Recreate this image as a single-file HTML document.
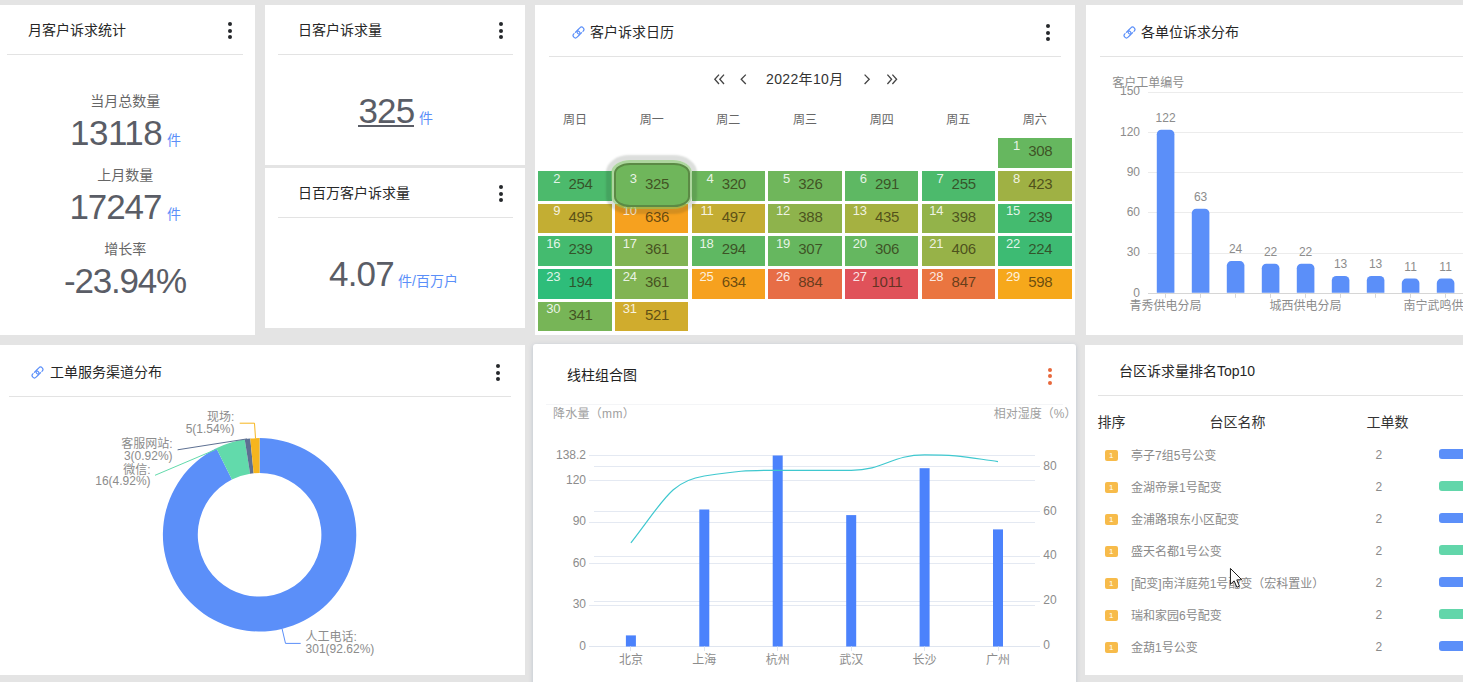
<!DOCTYPE html>
<html lang="zh-CN"><head><meta charset="utf-8"><title>客户诉求统计</title>
<style>
*{box-sizing:border-box;margin:0;padding:0}
html,body{width:1463px;height:682px;overflow:hidden;background:#e4e4e4}
body{position:relative;font-family:"Liberation Sans","Noto Sans CJK SC",sans-serif;color:#333;font-size:14px}
.card{position:absolute;background:#fff;overflow:hidden}
.abs{position:absolute;white-space:nowrap}
.title{position:absolute;font-size:14px;line-height:20px;color:#262626;white-space:nowrap}
.hr{position:absolute;height:1px;background:#e3e3e3}
.dots{position:absolute;width:4px}
.dots i{position:absolute;left:0;width:4px;height:4px;border-radius:50%;background:#25282b}
.lab{position:absolute;font-size:14px;line-height:16px;color:#666;white-space:nowrap;text-align:center}
.big{position:absolute;font-size:35px;line-height:36px;color:#5a5d66;white-space:nowrap;letter-spacing:-0.8px}
.unit{position:absolute;font-size:14px;line-height:16px;color:#5b8ff9;white-space:nowrap}
.wk{position:absolute;font-size:12px;line-height:14px;color:#666;text-align:center;white-space:nowrap}
.cell{position:absolute;width:73.5px;height:29.7px}
.cell b{position:absolute;font-weight:normal;font-size:13px;line-height:12px;color:rgba(255,255,255,.86);right:51.6px;top:1.7px;white-space:nowrap;letter-spacing:-0.2px}
.cell span{position:absolute;font-size:15px;line-height:16px;color:rgba(45,38,10,.7);left:12.2px;width:60px;text-align:center;top:5px;white-space:nowrap;letter-spacing:-0.3px}
svg{position:absolute;left:0;top:0;overflow:visible}
svg text{font-family:"Liberation Sans","Noto Sans CJK SC",sans-serif}
.th{position:absolute;font-size:14px;line-height:16px;color:#333;white-space:nowrap}
.td{position:absolute;font-size:12px;line-height:14px;color:#8a8a8a;white-space:nowrap}
.badge{position:absolute;width:12.9px;height:11px;border-radius:2px;background:#f7bb4a;color:#fff;font-size:8px;line-height:11.4px;text-align:center}
.pbar{position:absolute;height:9.6px;border-radius:3px 0 0 3px}
</style></head><body>

<div class="card" style="left:0;top:5px;width:255px;height:330px">
<div class="title" style="left:28px;top:15px">月客户诉求统计</div>
<div class="dots" style="left:228.4px;top:17.4px"><i style="top:0.0px;background:#25282b"></i><i style="top:6.5px;background:#25282b"></i><i style="top:13.1px;background:#25282b"></i></div>
<div class="hr" style="left:7px;top:49px;width:236px"></div>
<div class="lab" style="left:65.3px;top:88.0px;width:120px">当月总数量</div><div class="big" style="left:70.0px;top:109.7px;letter-spacing:-0.50px">13118</div><div class="unit" style="left:167.0px;top:126.7px">件</div>
<div class="lab" style="left:65.3px;top:162.0px;width:120px">上月数量</div><div class="big" style="left:69.5px;top:183.7px;letter-spacing:-1.10px">17247</div><div class="unit" style="left:167.0px;top:200.7px">件</div>
<div class="lab" style="left:65.3px;top:236.0px;width:120px">增长率</div><div class="big" style="left:64.0px;top:258.0px;letter-spacing:-1.20px">-23.94%</div>
</div>
<div class="card" style="left:265px;top:5px;width:260px;height:160px">
<div class="title" style="left:33px;top:15px">日客户诉求量</div>
<div class="dots" style="left:233.5px;top:17.4px"><i style="top:0.0px;background:#25282b"></i><i style="top:6.5px;background:#25282b"></i><i style="top:13.1px;background:#25282b"></i></div>
<div class="hr" style="left:13px;top:49px;width:235px"></div>
<div class="big" style="left:93.4px;top:88px">325</div>
<div class="abs" style="left:93px;top:120.2px;width:56px;height:1.4px;background:#5a5d66"></div>
<div class="unit" style="left:154px;top:104.5px">件</div>
</div>
<div class="card" style="left:265px;top:168px;width:260px;height:160px">
<div class="title" style="left:33px;top:15px">日百万客户诉求量</div>
<div class="dots" style="left:233.5px;top:17.4px"><i style="top:0.0px;background:#25282b"></i><i style="top:6.5px;background:#25282b"></i><i style="top:13.1px;background:#25282b"></i></div>
<div class="hr" style="left:13px;top:49px;width:235px"></div>
<div class="big" style="left:64px;top:88px">4.07</div>
<div class="unit" style="left:133px;top:104.5px">件/百万户</div>
</div>
<div class="card" style="left:535px;top:5px;width:540px;height:330px;overflow:visible">
<svg style="left:36.5px;top:20.5px" width="13" height="13" viewBox="0 0 13 13" fill="none" stroke="#5b8ff9" stroke-width="1.15" stroke-linecap="round"><g transform="translate(6.5 6.5) rotate(-45)"><path d="M3.90 2.35 H4.30 A2.35 2.35 0 0 0 4.30 -2.35 H1.20 A2.35 2.35 0 0 0 1.20 2.35 H2.10"/><path d="M-3.90 -2.35 H-4.30 A2.35 2.35 0 0 0 -4.30 2.35 H-1.20 A2.35 2.35 0 0 0 -1.20 -2.35 H-2.10"/></g></svg>
<div class="title" style="left:55px;top:17px">客户诉求日历</div>
<div class="dots" style="left:511.3px;top:19.4px"><i style="top:0.0px;background:#25282b"></i><i style="top:6.5px;background:#25282b"></i><i style="top:13.1px;background:#25282b"></i></div>
<div class="hr" style="left:14px;top:51px;width:512px"></div>
<svg width="540" height="100" fill="none" stroke="#444" stroke-width="1.3"><path d="M184 69.6 l-4.2 4.7 l4.2 4.7 M189 69.6 l-4.2 4.7 l4.2 4.7"/><path d="M210.8 69.6 l-4.6 4.7 l4.6 4.7"/><path d="M329.6 69.6 l4.6 4.7 l-4.6 4.7"/><path d="M352.4 69.6 l4.2 4.7 l-4.2 4.7 M357.4 69.6 l4.2 4.7 l-4.2 4.7"/></svg>
<div class="abs" style="left:231px;top:64px;font-size:14px;line-height:20px;color:#333;letter-spacing:.35px">2022年10月</div>
<div class="wk" style="left:3.3px;top:108px;width:73.5px">周日</div>
<div class="wk" style="left:79.9px;top:108px;width:73.5px">周一</div>
<div class="wk" style="left:156.6px;top:108px;width:73.5px">周二</div>
<div class="wk" style="left:233.2px;top:108px;width:73.5px">周三</div>
<div class="wk" style="left:309.9px;top:108px;width:73.5px">周四</div>
<div class="wk" style="left:386.5px;top:108px;width:73.5px">周五</div>
<div class="wk" style="left:463.1px;top:108px;width:73.5px">周六</div>
<div class="cell" style="left:463.1px;top:133.2px;background:#66b75f"><b>1</b><span>308</span></div>
<div class="cell" style="left:3.3px;top:165.9px;background:#4cba6c"><b>2</b><span>254</span></div>
<div class="cell" style="left:156.6px;top:165.9px;background:#6cb75c"><b>4</b><span>320</span></div>
<div class="cell" style="left:233.2px;top:165.9px;background:#6fb65b"><b>5</b><span>326</span></div>
<div class="cell" style="left:309.9px;top:165.9px;background:#5eb863"><b>6</b><span>291</span></div>
<div class="cell" style="left:386.5px;top:165.9px;background:#4cba6c"><b>7</b><span>255</span></div>
<div class="cell" style="left:463.1px;top:165.9px;background:#9fb144"><b>8</b><span>423</span></div>
<div class="cell" style="left:3.3px;top:198.6px;background:#c3ae33"><b>9</b><span>495</span></div>
<div class="cell" style="left:79.9px;top:198.6px;background:#f6a11f"><b>10</b><span>636</span></div>
<div class="cell" style="left:156.6px;top:198.6px;background:#c4ad33"><b>11</b><span>497</span></div>
<div class="cell" style="left:233.2px;top:198.6px;background:#8eb34c"><b>12</b><span>388</span></div>
<div class="cell" style="left:309.9px;top:198.6px;background:#a5b141"><b>13</b><span>435</span></div>
<div class="cell" style="left:386.5px;top:198.6px;background:#93b34a"><b>14</b><span>398</span></div>
<div class="cell" style="left:463.1px;top:198.6px;background:#44bb6f"><b>15</b><span>239</span></div>
<div class="cell" style="left:3.3px;top:231.4px;background:#44bb6f"><b>16</b><span>239</span></div>
<div class="cell" style="left:79.9px;top:231.4px;background:#81b453"><b>17</b><span>361</span></div>
<div class="cell" style="left:156.6px;top:231.4px;background:#5fb862"><b>18</b><span>294</span></div>
<div class="cell" style="left:233.2px;top:231.4px;background:#66b75f"><b>19</b><span>307</span></div>
<div class="cell" style="left:309.9px;top:231.4px;background:#65b760"><b>20</b><span>306</span></div>
<div class="cell" style="left:386.5px;top:231.4px;background:#97b248"><b>21</b><span>406</span></div>
<div class="cell" style="left:463.1px;top:231.4px;background:#3dbb73"><b>22</b><span>224</span></div>
<div class="cell" style="left:3.3px;top:264.1px;background:#2ebd7a"><b>23</b><span>194</span></div>
<div class="cell" style="left:79.9px;top:264.1px;background:#81b453"><b>24</b><span>361</span></div>
<div class="cell" style="left:156.6px;top:264.1px;background:#f6a11f"><b>25</b><span>634</span></div>
<div class="cell" style="left:233.2px;top:264.1px;background:#e76d46"><b>26</b><span>884</span></div>
<div class="cell" style="left:309.9px;top:264.1px;background:#e0525a"><b>27</b><span>1011</span></div>
<div class="cell" style="left:386.5px;top:264.1px;background:#ea7540"><b>28</b><span>847</span></div>
<div class="cell" style="left:463.1px;top:264.1px;background:#f6a81b"><b>29</b><span>598</span></div>
<div class="cell" style="left:3.3px;top:296.8px;background:#77b557"><b>30</b><span>341</span></div>
<div class="cell" style="left:79.9px;top:296.8px;background:#d0ac2d"><b>31</b><span>521</span></div>
<div class="abs" style="left:76.3px;top:155.2px;width:81px;height:49px;border-radius:19px/13px;background:rgba(118,186,94,.6);box-shadow:0 0 2px 4.5px rgba(40,50,40,.16)"></div>
<div class="abs" style="left:79.3px;top:157.9px;width:75.4px;height:44.4px;border-radius:16px/10.5px;background:#6fb65b;border:2.3px solid #5b8a45"></div>
<div class="cell" style="left:79.9px;top:165.9px"><b>3</b><span>325</span></div>
</div>
<div class="card" style="left:1086px;top:5px;width:400px;height:330px">
<svg style="left:36.5px;top:20.5px" width="13" height="13" viewBox="0 0 13 13" fill="none" stroke="#5b8ff9" stroke-width="1.15" stroke-linecap="round"><g transform="translate(6.5 6.5) rotate(-45)"><path d="M3.90 2.35 H4.30 A2.35 2.35 0 0 0 4.30 -2.35 H1.20 A2.35 2.35 0 0 0 1.20 2.35 H2.10"/><path d="M-3.90 -2.35 H-4.30 A2.35 2.35 0 0 0 -4.30 2.35 H-1.20 A2.35 2.35 0 0 0 -1.20 -2.35 H-2.10"/></g></svg>
<div class="title" style="left:55px;top:17px">各单位诉求分布</div>
<div class="hr" style="left:14px;top:51px;width:400px"></div>
<svg width="400" height="330" font-size="12"><line x1="62" x2="400" y1="248.5" y2="248.5" stroke="#ececec" stroke-width="1"/><line x1="62" x2="400" y1="207.5" y2="207.5" stroke="#ececec" stroke-width="1"/><line x1="62" x2="400" y1="167.5" y2="167.5" stroke="#ececec" stroke-width="1"/><line x1="62" x2="400" y1="127.5" y2="127.5" stroke="#ececec" stroke-width="1"/><line x1="62" x2="400" y1="87.5" y2="87.5" stroke="#ececec" stroke-width="1"/><line x1="62" x2="400" y1="288.5" y2="288.5" stroke="#d6d6d6" stroke-width="1"/><text x="54" y="291.5" text-anchor="end" fill="#8c8c8c">0</text><text x="54" y="251.3" text-anchor="end" fill="#8c8c8c">30</text><text x="54" y="211.1" text-anchor="end" fill="#8c8c8c">60</text><text x="54" y="170.8" text-anchor="end" fill="#8c8c8c">90</text><text x="54" y="130.6" text-anchor="end" fill="#8c8c8c">120</text><text x="54" y="90.4" text-anchor="end" fill="#8c8c8c">150</text><text x="26.3" y="82.2" fill="#8c8c8c">客户工单编号</text><path d="M70.8 287.8 V129.2 a4.5 4.5 0 0 1 4.5 -4.5 h8.6 a4.5 4.5 0 0 1 4.5 4.5 V287.8 z" fill="#5b8ff9"/><text x="79.6" y="116.7" text-anchor="middle" fill="#8c8c8c">122</text><line x1="79.5" x2="79.5" y1="288.3" y2="292.8" stroke="#d6d6d6"/><path d="M105.8 287.8 V208.3 a4.5 4.5 0 0 1 4.5 -4.5 h8.6 a4.5 4.5 0 0 1 4.5 4.5 V287.8 z" fill="#5b8ff9"/><text x="114.6" y="195.8" text-anchor="middle" fill="#8c8c8c">63</text><line x1="114.5" x2="114.5" y1="288.3" y2="292.8" stroke="#d6d6d6"/><path d="M140.8 287.8 V260.6 a4.5 4.5 0 0 1 4.5 -4.5 h8.6 a4.5 4.5 0 0 1 4.5 4.5 V287.8 z" fill="#5b8ff9"/><text x="149.6" y="248.1" text-anchor="middle" fill="#8c8c8c">24</text><line x1="149.5" x2="149.5" y1="288.3" y2="292.8" stroke="#d6d6d6"/><path d="M175.8 287.8 V263.3 a4.5 4.5 0 0 1 4.5 -4.5 h8.6 a4.5 4.5 0 0 1 4.5 4.5 V287.8 z" fill="#5b8ff9"/><text x="184.6" y="250.8" text-anchor="middle" fill="#8c8c8c">22</text><line x1="184.5" x2="184.5" y1="288.3" y2="292.8" stroke="#d6d6d6"/><path d="M210.8 287.8 V263.3 a4.5 4.5 0 0 1 4.5 -4.5 h8.6 a4.5 4.5 0 0 1 4.5 4.5 V287.8 z" fill="#5b8ff9"/><text x="219.6" y="250.8" text-anchor="middle" fill="#8c8c8c">22</text><line x1="219.5" x2="219.5" y1="288.3" y2="292.8" stroke="#d6d6d6"/><path d="M245.8 287.8 V275.4 a4.5 4.5 0 0 1 4.5 -4.5 h8.6 a4.5 4.5 0 0 1 4.5 4.5 V287.8 z" fill="#5b8ff9"/><text x="254.6" y="262.9" text-anchor="middle" fill="#8c8c8c">13</text><line x1="254.5" x2="254.5" y1="288.3" y2="292.8" stroke="#d6d6d6"/><path d="M280.8 287.8 V275.4 a4.5 4.5 0 0 1 4.5 -4.5 h8.6 a4.5 4.5 0 0 1 4.5 4.5 V287.8 z" fill="#5b8ff9"/><text x="289.6" y="262.9" text-anchor="middle" fill="#8c8c8c">13</text><line x1="289.5" x2="289.5" y1="288.3" y2="292.8" stroke="#d6d6d6"/><path d="M315.8 287.8 V278.1 a4.5 4.5 0 0 1 4.5 -4.5 h8.6 a4.5 4.5 0 0 1 4.5 4.5 V287.8 z" fill="#5b8ff9"/><text x="324.6" y="265.6" text-anchor="middle" fill="#8c8c8c">11</text><line x1="324.5" x2="324.5" y1="288.3" y2="292.8" stroke="#d6d6d6"/><path d="M350.8 287.8 V278.1 a4.5 4.5 0 0 1 4.5 -4.5 h8.6 a4.5 4.5 0 0 1 4.5 4.5 V287.8 z" fill="#5b8ff9"/><text x="359.6" y="265.6" text-anchor="middle" fill="#8c8c8c">11</text><line x1="359.5" x2="359.5" y1="288.3" y2="292.8" stroke="#d6d6d6"/><path d="M385.8 287.8 V279.4 a4.5 4.5 0 0 1 4.5 -4.5 h8.6 a4.5 4.5 0 0 1 4.5 4.5 V287.8 z" fill="#5b8ff9"/><text x="394.6" y="266.9" text-anchor="middle" fill="#8c8c8c">10</text><line x1="394.5" x2="394.5" y1="288.3" y2="292.8" stroke="#d6d6d6"/><text x="79.6" y="305.2" text-anchor="middle" fill="#8c8c8c">青秀供电分局</text><text x="219.6" y="305.2" text-anchor="middle" fill="#8c8c8c">城西供电分局</text><text x="359.6" y="305.2" text-anchor="middle" fill="#8c8c8c">南宁武鸣供电局</text></svg>
</div>
<div class="card" style="left:0;top:345px;width:525px;height:330px">
<svg style="left:31.4px;top:20.5px" width="13" height="13" viewBox="0 0 13 13" fill="none" stroke="#5b8ff9" stroke-width="1.15" stroke-linecap="round"><g transform="translate(6.5 6.5) rotate(-45)"><path d="M3.90 2.35 H4.30 A2.35 2.35 0 0 0 4.30 -2.35 H1.20 A2.35 2.35 0 0 0 1.20 2.35 H2.10"/><path d="M-3.90 -2.35 H-4.30 A2.35 2.35 0 0 0 -4.30 2.35 H-1.20 A2.35 2.35 0 0 0 -1.20 -2.35 H-2.10"/></g></svg>
<div class="title" style="left:50px;top:17px">工单服务渠道分布</div>
<div class="dots" style="left:496.3px;top:19.4px"><i style="top:0.0px;background:#25282b"></i><i style="top:6.5px;background:#25282b"></i><i style="top:13.1px;background:#25282b"></i></div>
<div class="hr" style="left:9px;top:51px;width:502px"></div>
<svg width="525" height="330" font-size="12"><path d="M259.60 93.10 A96.70 96.70 0 1 1 216.32 103.32 L231.94 134.53 A61.80 61.80 0 1 0 259.60 128.00 Z" fill="#5b8ff9"/><path d="M216.32 103.32 A96.70 96.70 0 0 1 244.70 94.25 L250.08 128.74 A61.80 61.80 0 0 0 231.94 134.53 Z" fill="#62daab"/><path d="M244.70 94.25 A96.70 96.70 0 0 1 250.27 93.55 L253.64 128.29 A61.80 61.80 0 0 0 250.08 128.74 Z" fill="#5d7092"/><path d="M250.27 93.55 A96.70 96.70 0 0 1 259.60 93.10 L259.60 128.00 A61.80 61.80 0 0 0 253.64 128.29 Z" fill="#f6b51e"/><path d="M239.7 78.2 H254.5 L255.5 93.2" fill="none" stroke="#f6b51e" stroke-width="1"/><path d="M177.6 104.8 L247 93.9" fill="none" stroke="#5d7092" stroke-width="1"/><path d="M155 130.3 L217 104" fill="none" stroke="#62daab" stroke-width="1"/><path d="M282.1 283.9 L285.5 298.4 H300.7" fill="none" stroke="#5b8ff9" stroke-width="1"/><text x="234.4" y="76.2" text-anchor="end" fill="#8c8c8c">现场:</text><text x="234.4" y="88.2" text-anchor="end" fill="#8c8c8c">5(1.54%)</text><text x="172.6" y="102.6" text-anchor="end" fill="#8c8c8c">客服网站:</text><text x="172.6" y="114.6" text-anchor="end" fill="#8c8c8c">3(0.92%)</text><text x="150.6" y="128.6" text-anchor="end" fill="#8c8c8c">微信:</text><text x="150.6" y="140.2" text-anchor="end" fill="#8c8c8c">16(4.92%)</text><text x="305.6" y="296.3" text-anchor="start" fill="#8c8c8c">人工电话:</text><text x="305.6" y="308.3" text-anchor="start" fill="#8c8c8c">301(92.62%)</text></svg>
</div>
<div class="card" style="left:533px;top:344px;width:543px;height:345px;border-radius:3px;box-shadow:0 1px 4px rgba(120,140,170,.36)">
<div class="title" style="left:34px;top:21px;color:#222">线柱组合图</div>
<div class="dots" style="left:515.3px;top:23.5px"><i style="top:0.0px;background:#e8683c"></i><i style="top:6.5px;background:#e8683c"></i><i style="top:13.1px;background:#e8683c"></i></div>
<div class="abs" style="left:13px;top:60px;width:517px;height:1px;background:#f4f5f7"></div>
<svg width="543" height="345" font-size="12"><line x1="56" x2="502" y1="261.5" y2="261.5" stroke="#e4e9f2" stroke-width="1"/><line x1="56" x2="502" y1="219.5" y2="219.5" stroke="#e4e9f2" stroke-width="1"/><line x1="56" x2="502" y1="178.5" y2="178.5" stroke="#e4e9f2" stroke-width="1"/><line x1="56" x2="502" y1="136.5" y2="136.5" stroke="#e4e9f2" stroke-width="1"/><line x1="56" x2="502" y1="111.5" y2="111.5" stroke="#e4e9f2" stroke-width="1"/><line x1="61" x2="507" y1="257.5" y2="257.5" stroke="#e4e9f2" stroke-width="1"/><line x1="61" x2="507" y1="212.5" y2="212.5" stroke="#e4e9f2" stroke-width="1"/><line x1="61" x2="507" y1="167.5" y2="167.5" stroke="#e4e9f2" stroke-width="1"/><line x1="61" x2="507" y1="122.5" y2="122.5" stroke="#e4e9f2" stroke-width="1"/><line x1="56" x2="507" y1="302.5" y2="302.5" stroke="#dfe5ef" stroke-width="1"/><text x="53" y="305.7" text-anchor="end" fill="#8c8c8c">0</text><text x="53" y="264.2" text-anchor="end" fill="#8c8c8c">30</text><text x="53" y="222.8" text-anchor="end" fill="#8c8c8c">60</text><text x="53" y="181.3" text-anchor="end" fill="#8c8c8c">90</text><text x="53" y="139.9" text-anchor="end" fill="#8c8c8c">120</text><text x="53" y="114.7" text-anchor="end" fill="#8c8c8c">138.2</text><text x="510.3" y="305.3" fill="#8c8c8c">0</text><text x="510.3" y="260.4" fill="#8c8c8c">20</text><text x="510.3" y="215.4" fill="#8c8c8c">40</text><text x="510.3" y="170.5" fill="#8c8c8c">60</text><text x="510.3" y="125.5" fill="#8c8c8c">80</text><text x="19.9" y="73.8" fill="#a0a0a0" letter-spacing="0.3">降水量（mm）</text><text x="543.4" y="73.8" text-anchor="end" fill="#a0a0a0">相对湿度（%）</text><rect x="92.9" y="291.4" width="10" height="11.1" fill="#4b82fc"/><line x1="97.5" x2="97.5" y1="302.5" y2="307.0" stroke="#dfe5ef"/><text x="97.9" y="320.3" text-anchor="middle" fill="#8c8c8c">北京</text><rect x="166.3" y="165.5" width="10" height="137.0" fill="#4b82fc"/><line x1="171.5" x2="171.5" y1="302.5" y2="307.0" stroke="#dfe5ef"/><text x="171.3" y="320.3" text-anchor="middle" fill="#8c8c8c">上海</text><rect x="239.7" y="111.5" width="10" height="191.0" fill="#4b82fc"/><line x1="244.5" x2="244.5" y1="302.5" y2="307.0" stroke="#dfe5ef"/><text x="244.7" y="320.3" text-anchor="middle" fill="#8c8c8c">杭州</text><rect x="313.2" y="171.1" width="10" height="131.4" fill="#4b82fc"/><line x1="318.5" x2="318.5" y1="302.5" y2="307.0" stroke="#dfe5ef"/><text x="318.2" y="320.3" text-anchor="middle" fill="#8c8c8c">武汉</text><rect x="386.6" y="124.2" width="10" height="178.3" fill="#4b82fc"/><line x1="391.5" x2="391.5" y1="302.5" y2="307.0" stroke="#dfe5ef"/><text x="391.6" y="320.3" text-anchor="middle" fill="#8c8c8c">长沙</text><rect x="460.0" y="185.4" width="10" height="117.1" fill="#4b82fc"/><line x1="465.5" x2="465.5" y1="302.5" y2="307.0" stroke="#dfe5ef"/><text x="465.0" y="320.3" text-anchor="middle" fill="#8c8c8c">广州</text><path d="M97.9 198.9 C130.9 156.2 138.3 137.0 171.3 132.0 C204.4 126.9 211.7 126.3 244.7 126.3 C277.8 126.3 285.1 126.3 318.2 126.3 C351.2 126.3 358.5 110.8 391.6 110.8 C424.6 110.8 432.0 113.0 465.0 117.6" fill="none" stroke="#3fc8cf" stroke-width="1.2"/></svg>
</div>
<div class="card" style="left:1085px;top:345px;width:400px;height:330px">
<div class="title" style="left:34px;top:16px">台区诉求量排名Top10</div>
<div class="hr" style="left:13px;top:50px;width:400px"></div>
<div class="th" style="left:12.4px;top:69px">排序</div>
<div class="th" style="left:124.4px;top:69px">台区名称</div>
<div class="th" style="left:281.6px;top:69px">工单数</div>
<div class="badge" style="left:19.9px;top:104.9px">1</div>
<div class="td" style="left:46px;top:103.8px">亭子7组5号公变</div>
<div class="td" style="left:290.5px;top:103.4px">2</div>
<div class="pbar" style="left:354px;top:104.1px;width:60px;background:#5b8ff9"></div>
<div class="badge" style="left:19.9px;top:136.9px">1</div>
<div class="td" style="left:46px;top:135.8px">金湖帝景1号配变</div>
<div class="td" style="left:290.5px;top:135.4px">2</div>
<div class="pbar" style="left:354px;top:136.1px;width:60px;background:#62d6aa"></div>
<div class="badge" style="left:19.9px;top:168.9px">1</div>
<div class="td" style="left:46px;top:167.8px">金浦路琅东小区配变</div>
<div class="td" style="left:290.5px;top:167.4px">2</div>
<div class="pbar" style="left:354px;top:168.1px;width:60px;background:#5b8ff9"></div>
<div class="badge" style="left:19.9px;top:200.9px">1</div>
<div class="td" style="left:46px;top:199.8px">盛天名都1号公变</div>
<div class="td" style="left:290.5px;top:199.4px">2</div>
<div class="pbar" style="left:354px;top:200.1px;width:60px;background:#62d6aa"></div>
<div class="badge" style="left:19.9px;top:232.9px">1</div>
<div class="td" style="left:46px;top:231.8px">[配变]南洋庭苑1号配变（宏科置业）</div>
<div class="td" style="left:290.5px;top:231.4px">2</div>
<div class="pbar" style="left:354px;top:232.1px;width:60px;background:#5b8ff9"></div>
<div class="badge" style="left:19.9px;top:264.9px">1</div>
<div class="td" style="left:46px;top:263.8px">瑞和家园6号配变</div>
<div class="td" style="left:290.5px;top:263.4px">2</div>
<div class="pbar" style="left:354px;top:264.1px;width:60px;background:#62d6aa"></div>
<div class="badge" style="left:19.9px;top:296.9px">1</div>
<div class="td" style="left:46px;top:295.8px">金葫1号公变</div>
<div class="td" style="left:290.5px;top:295.4px">2</div>
<div class="pbar" style="left:354px;top:296.1px;width:60px;background:#5b8ff9"></div>
</div>
<svg style="left:1228.9px;top:566.7px" width="16" height="24" viewBox="0 0 16 24"><path transform="scale(.95)" d="M1.5 1.5 V18.2 L5.4 14.6 L8.3 21.3 L11 20.1 L8.2 13.6 L13.4 13.4 Z" fill="#fff" stroke="#111" stroke-width="1" stroke-linejoin="round"/></svg>
</body></html>
